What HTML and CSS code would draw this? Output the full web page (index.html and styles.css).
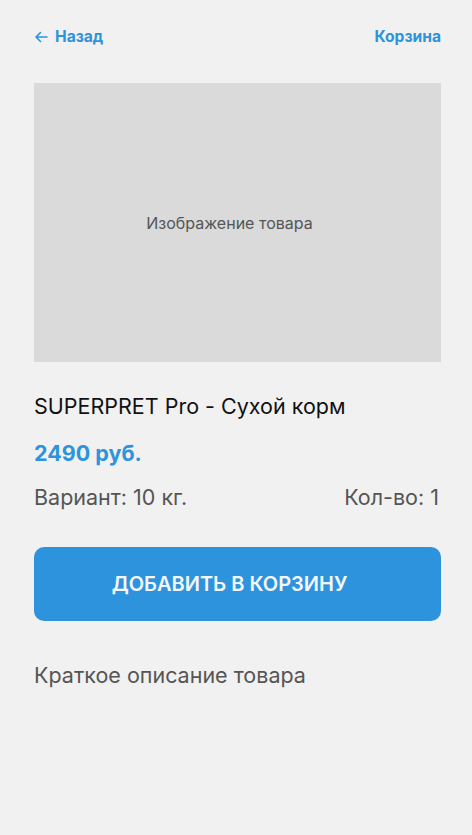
FILE: index.html
```html
<!DOCTYPE html>
<html lang="ru">
<head>
<meta charset="utf-8">
<link rel="stylesheet" href="styles.css">
</head>
<body>
<div class="page">
  <header class="top">
    <a class="link back"><svg width="14" height="12" viewBox="0 0 14 12"><path d="M13 6H2M6.5 1.5L2 6l4.5 4.5" fill="none" stroke="currentColor" stroke-width="1.6" stroke-linecap="round" stroke-linejoin="round"/></svg>Назад</a>
    <a class="link">Корзина</a>
  </header>
  <div class="image">Изображение товара</div>
  <h1 class="title">SUPERPRET Pro - Сухой корм</h1>
  <div class="price">2490 руб.</div>
  <div class="meta"><span>Вариант: 10 кг.</span><span>Кол-во: 1</span></div>
  <button class="add">ДОБАВИТЬ В КОРЗИНУ</button>
  <p class="desc">Краткое описание товара</p>
</div>
</body>
</html>
```
FILE: styles.css
```css
html, body { margin: 0; padding: 0; background: #f1f1f1; }
body { font-family: Inter, "Noto Sans", sans-serif; }
.page { width: 407px; margin-left: 34px; display: flex; flex-direction: column; }
.top { display: flex; justify-content: space-between; align-items: center; height: 73px; }
.link { color: #2d93dd; font-weight: 700; font-size: 15.6px; display: flex; align-items: center; gap: 7px; }
.back svg { margin-top: 1px; }
.image { margin-top: 10px; height: 279px; padding-right: 16px; background: #dadada; display: flex; align-items: center; justify-content: center; color: #555; font-size: 16px; }
.title { margin: 30px 0 0; font-size: 21.5px; font-weight: 400; color: #111; line-height: 28px; }
.price { margin-top: 19px; font-size: 21.5px; font-weight: 700; color: #2d93dd; line-height: 28px; }
.meta { margin-top: 16px; padding-right: 2px; display: flex; justify-content: space-between; font-size: 21.5px; color: #555; line-height: 28px; }
.add { margin-top: 36px; height: 74px; padding: 0 16px 0 0; border: 0; border-radius: 10px; background: #2e93dd; color: #f3f7fb; font-family: inherit; font-size: 20px; font-weight: 600; }
.desc { margin: 40px 0 0; font-size: 21.5px; color: #555; line-height: 28px; }
```
